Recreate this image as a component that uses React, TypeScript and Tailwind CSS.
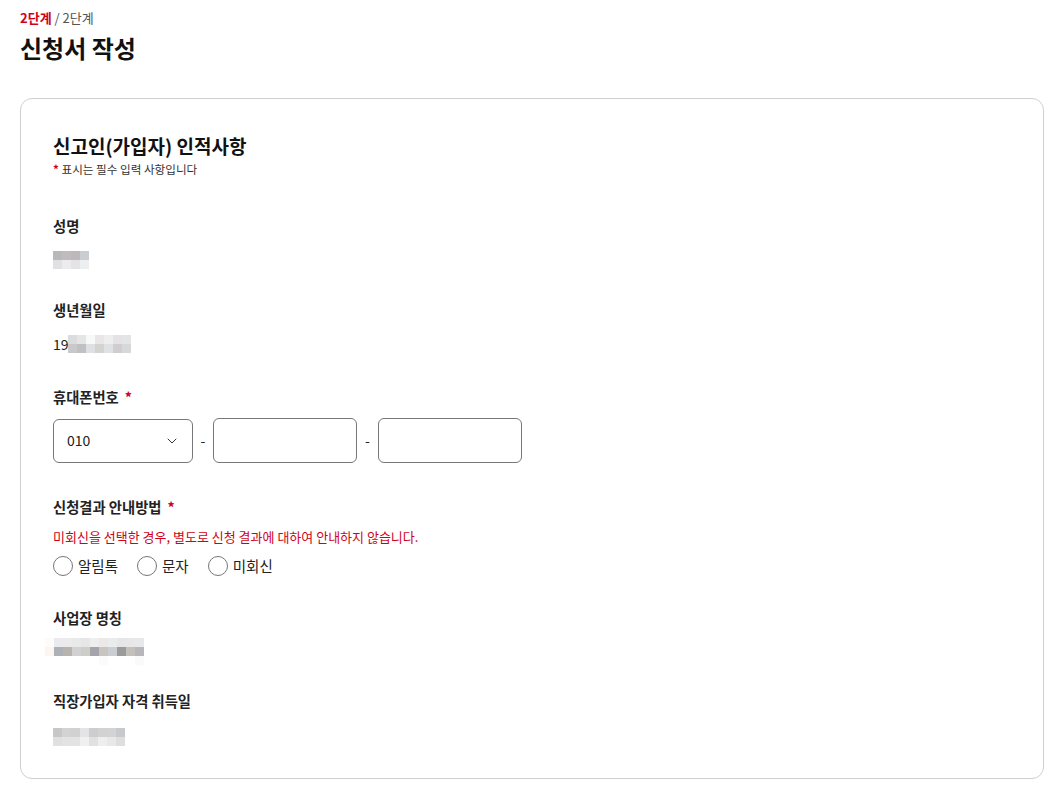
import { ChevronDown } from 'lucide-react';

type Cell = string;

// pixelated (redacted) value blocks
const Mosaic = ({ rows, className = '' }: { rows: Cell[][]; className?: string }) => (
  <div className={`flex flex-col ${className}`}>
    {rows.map((row, i) => (
      <div key={i} className="flex">
        {row.map((c, j) => (
          <div key={j} className="w-[9px] h-[9px]" style={{ backgroundColor: c }} />
        ))}
      </div>
    ))}
  </div>
);

const nameRows = [
  ['#b7b9bd', '#bfbcbd', '#bdb9bb', '#c9cdd1'],
  ['#e1e1e3', '#ececec', '#e4e3e5', '#eceef0'],
];

const birthRows = [
  ['#dcdcdc', '#e5e5e6', '#f8f8f8', '#e8e6e7', '#eeeeef', '#e4e2e4', '#e3e4e6'],
  ['#c9c9cb', '#c1c1c3', '#dfe0e2', '#d5d2d2', '#dfe2e5', '#d1ccce', '#d7d8da'],
];

const bizRows = [
  ['#fdfcfb', '#eaebee', '#ecebeb', '#e9e9ea', '#e6e6e7', '#eeeeee', '#ebe8e7', '#eaebed', '#e6e5e8', '#e7e7e8', '#e8e8ea'],
  ['#fdf6ee', '#aeb0b7', '#b7b4b0', '#d2d1d1', '#cecdca', '#a4a4aa', '#c7c4c1', '#cacdd2', '#9b9b9b', '#c3bfbb', '#b7b7bb'],
  ['#ffffff', '#ffffff', '#ffffff', '#ffffff', '#ffffff', '#ffffff', '#fbfbfb', '#ffffff', '#ffffff', '#ffffff', '#fafafa'],
];

const dateRows = [
  ['#c7c7c9', '#d3d3d3', '#d1d1d3', '#e4e4e6', '#cecdce', '#d2d2d2', '#d3d3d4', '#c8c9cc'],
  ['#e0e0e1', '#e3e3e3', '#e3e3e4', '#f0f0f1', '#e2e1e2', '#eeeeee', '#e8e8e8', '#dededf'],
];

const Label = ({ children, required }: { children: React.ReactNode; required?: boolean }) => (
  <div className="text-[14.3px] leading-[20px] font-bold text-[#222]">
    {children}
    {required && <span className="text-[#d0021b] ml-[6px]">*</span>}
  </div>
);

const App = () => {
  const options = ['알림톡', '문자', '미회신'];

  return (
    <div
      className="w-[1056px] min-h-[792px] bg-white pl-5 pr-[12px] pt-[9px] text-[#222]"
      style={{ fontFamily: '"Noto Sans CJK KR", "Noto Sans", sans-serif' }}
    >
      {/* Breadcrumb */}
      <div className="text-[13px] leading-[17px]">
        <span className="font-bold text-[#d0021b]">2단계</span>
        <span className="text-[#555]"> / 2단계</span>
      </div>
      <h1 className="mt-[5px] text-[24px] leading-[34px] font-bold text-[#111]">신청서 작성</h1>

      {/* Form Card */}
      <div className="mt-[33px] border border-[#cfcfcf] rounded-[12px] pl-[32px] pr-8 pt-[33px] pb-[32px]">
        <h2 className="text-[19px] leading-[28px] font-bold text-[#111]">신고인(가입자) 인적사항</h2>
        <div className="mt-[1px] text-[11.6px] leading-[16px] text-[#333]">
          <span className="text-[#d0021b] font-bold">*</span> 표시는 필수 입력 사항입니다
        </div>

        <div className="mt-[39px]">
          <Label>성명</Label>
          <Mosaic rows={nameRows} className="mt-[15px]" />
        </div>

        <div className="mt-[31px]">
          <Label>생년월일</Label>
          <div className="mt-[14px] flex items-center text-[14px] leading-[20px]">
            <span>19</span>
            <Mosaic rows={birthRows} className="-ml-[1px]" />
          </div>
        </div>

        <div className="mt-[33px]">
          <Label required>휴대폰번호</Label>
          <div className="mt-[11px] flex items-center">
            <div className="w-[140px] h-[44px] border border-[#777] rounded-[6px] flex items-center justify-between pl-[13px] pr-[12px] text-[14px]">
              <span>010</span>
              <ChevronDown size={16} strokeWidth={1.5} className="text-[#333]" />
            </div>
            <span className="w-[20px] text-center text-[14px]">-</span>
            <input className="w-[144px] h-[45px] border border-[#777] rounded-[6px] outline-none" />
            <span className="w-[21px] text-center text-[14px]">-</span>
            <input className="w-[144px] h-[45px] border border-[#777] rounded-[6px] outline-none" />
          </div>
        </div>

        <div className="mt-[34px]">
          <Label required>신청결과 안내방법</Label>
          <div className="mt-[11px] text-[13px] leading-[18px] text-[#d0021b]">
            미회신을 선택한 경우, 별도로 신청 결과에 대하여 안내하지 않습니다.
          </div>
          <div className="mt-[10px] flex items-center gap-[19px]">
            {options.map((o) => (
              <label key={o} className="flex items-center gap-[5px] text-[14.5px] leading-[20px] text-[#222]">
                <span className="w-[20px] h-[20px] rounded-full border border-[#767676] bg-white" />
                {o}
              </label>
            ))}
          </div>
        </div>

        <div className="mt-[32px]">
          <Label>사업장 명칭</Label>
          <Mosaic rows={bizRows} className="mt-[10px] -ml-[8px]" />
        </div>

        <div className="mt-[26px]">
          <Label>직장가입자 자격 취득일</Label>
          <Mosaic rows={dateRows} className="mt-[17px]" />
        </div>
      </div>
    </div>
  );
};

export default App;
